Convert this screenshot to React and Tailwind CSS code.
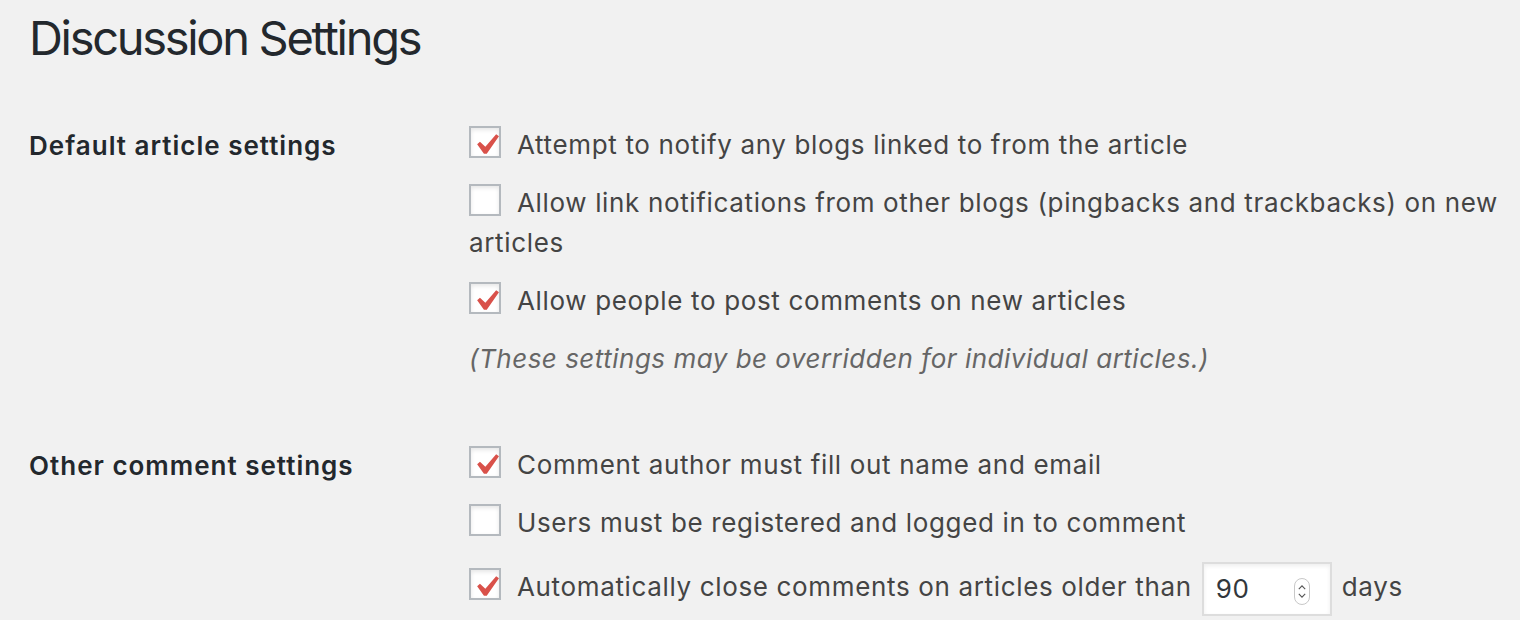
import React from "react";

const Check = () => (
  <svg
    viewBox="0 0 20 20"
    className="absolute left-[-6px] top-[-4px] w-[42px] h-[42px]"
  >
    <path d="M14.83 4.89l1.34.94-5.81 8.38H9.02L5.78 9.67l1.34-1.25 2.57 2.4z" fill="#d9514a" />
  </svg>
);

const Box = ({ checked }) => (
  <span className="relative inline-block w-[32px] h-[32px] mr-[16px] align-[-4px] bg-white border-2 border-[#b4b9be] shadow-[inset_0_2px_4px_rgba(0,0,0,0.1)]">
    {checked && <Check />}
  </span>
);

const Item = ({ checked, children }) => (
  <div className="leading-[40px] mb-[18px]">
    <Box checked={checked} />
    {children}
  </div>
);

const Spinner = () => (
  <span className="absolute right-[20px] top-[14px] w-[16px] h-[27px] rounded-[8px] border border-[#c8c8c8] bg-white flex flex-col items-center justify-center gap-[3px]">
    <svg viewBox="0 0 10 6" className="w-[8px] h-[5px]">
      <path d="M1 5L5 1l4 4" fill="none" stroke="#555" strokeWidth="1.4" />
    </svg>
    <svg viewBox="0 0 10 6" className="w-[8px] h-[5px]">
      <path d="M1 1l4 4 4-4" fill="none" stroke="#555" strokeWidth="1.4" />
    </svg>
  </span>
);

const Section = ({ label, children, className }) => (
  <div className={"flex " + className}>
    <div className="w-[440px] shrink-0 font-semibold text-[#23282d] leading-[40px] pt-[1px] tracking-[1px]">
      {label}
    </div>
    <div className="flex-1 pr-[10px]">{children}</div>
  </div>
);

export default function App() {
  return (
    <div className="min-h-[620px] bg-[#f1f1f1] pl-[29px] text-[26px] text-[#444] tracking-[0.65px] overflow-hidden" style={{ fontFamily: "Inter, 'Noto Sans', sans-serif" }}>
      <h1 className="text-[47px] leading-[60px] text-[#23282d] font-normal pt-[8px] tracking-[-2.3px]">
        Discussion Settings
      </h1>

      <Section label="Default article settings" className="mt-[57px]">
        <Item checked>Attempt to notify any blogs linked to from the article</Item>
        <Item>
          Allow link notifications from other blogs (pingbacks and trackbacks) on new articles
        </Item>
        <Item checked>Allow people to post comments on new articles</Item>
        <p className="italic text-[#666] leading-[40px] tracking-[0.5px]">
          (These settings may be overridden for individual articles.)
        </p>
      </Section>

      <Section label="Other comment settings" className="mt-[66px]">
        <Item checked>Comment author must fill out name and email</Item>
        <Item>Users must be registered and logged in to comment</Item>
        <div className="leading-[40px] mt-[19px]">
          <Box checked />
          Automatically close comments on articles older than
          <span className="relative inline-block align-middle ml-[10px] mr-[10px] w-[130px] h-[54px] bg-white border-2 border-[#ddd] shadow-[inset_0_2px_4px_rgba(0,0,0,0.07)] pl-[12px] leading-[50px] text-[#32373c]">
            90
            <Spinner />
          </span>
          days
        </div>
      </Section>
    </div>
  );
}
